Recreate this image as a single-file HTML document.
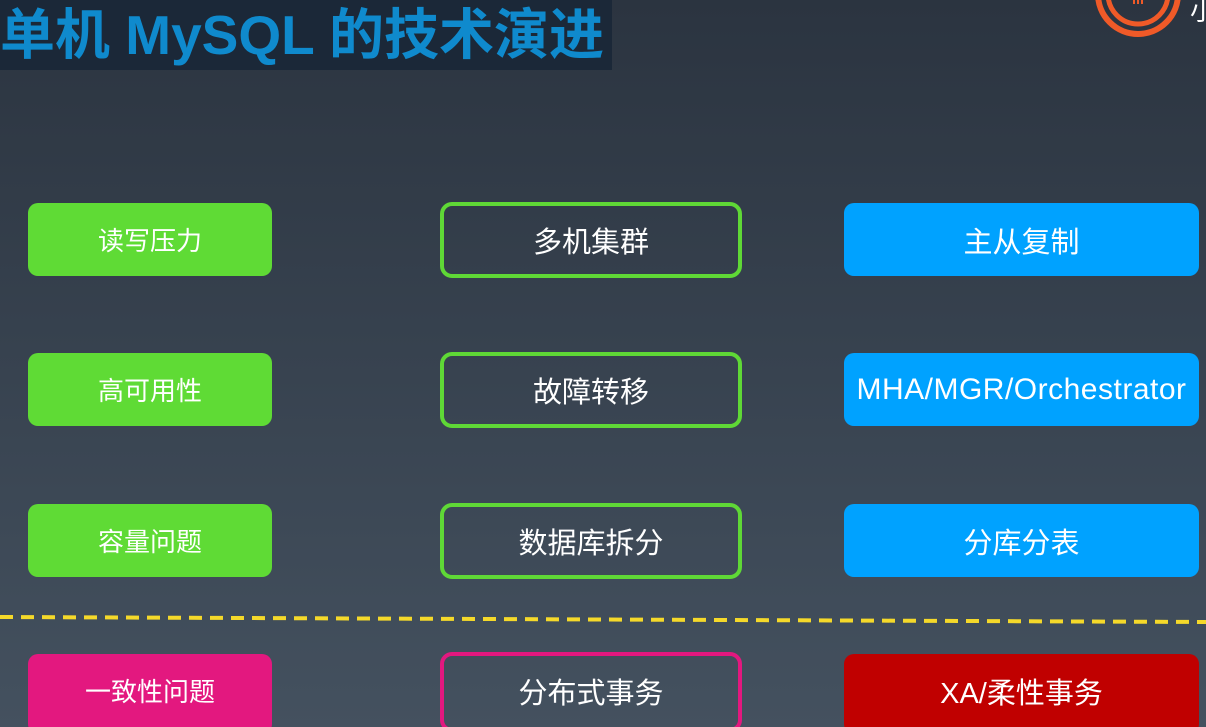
<!DOCTYPE html>
<html><head><meta charset="utf-8"><style>
html,body{margin:0;width:1206px;height:727px;overflow:hidden}
body{background:linear-gradient(#2b3440,#44515f);font-family:"Liberation Sans","Noto Sans CJK SC",sans-serif;position:relative}
.t{position:absolute;left:0;top:0;width:612px;height:70px;background:#1b2838;color:#0f8acd;font-weight:bold;font-size:55px;line-height:70px;white-space:nowrap;overflow:hidden;font-family:"Liberation Sans","Noto Sans CJK SC",sans-serif}
.b{position:absolute;box-sizing:border-box;border-radius:10px;color:#fff;display:flex;align-items:center;justify-content:center;white-space:nowrap}
.l{left:28px;width:244px;height:73px;background:#5fdb35;font-size:26px}
.m{left:440px;width:302px;height:76px;border:4px solid #5fd836;font-size:29px;border-radius:12px}
.r{left:844px;width:355px;height:73px;background:#00a2ff;font-size:29px}
</style></head><body>
<div class="t">单机 MySQL 的技术演进</div>
<svg style="position:absolute;left:1090px;top:0" width="116" height="45">
<circle cx="48" cy="-6" r="40" fill="none" stroke="#f05a28" stroke-width="6"/>
<circle cx="48" cy="-6" r="30" fill="none" stroke="#f05a28" stroke-width="5"/>
<rect x="43" y="0" width="2" height="4" fill="#f05a28"/><rect x="47" y="0" width="2" height="4" fill="#f05a28"/><rect x="51" y="0" width="2" height="4" fill="#f05a28"/>
<text x="100" y="20" fill="#fff" font-size="26" font-family="Noto Sans CJK SC">小</text>
</svg>
<div class="b l" style="top:203px">读写压力</div>
<div class="b m" style="top:202px">多机集群</div>
<div class="b r" style="top:203px">主从复制</div>
<div class="b l" style="top:353px">高可用性</div>
<div class="b m" style="top:352px">故障转移</div>
<div class="b r" style="top:353px;font-size:30px;letter-spacing:0.5px">MHA/MGR/Orchestrator</div>
<div class="b l" style="top:504px">容量问题</div>
<div class="b m" style="top:503px">数据库拆分</div>
<div class="b r" style="top:504px">分库分表</div>
<svg style="position:absolute;left:0;top:610px" width="1206" height="20"><line x1="0" y1="7" x2="1206" y2="12" stroke="#f5d92a" stroke-width="4" stroke-dasharray="13 8"/></svg>
<div class="b l" style="top:654px;background:#e3187f;height:80px;padding-bottom:7px">一致性问题</div>
<div class="b m" style="top:652px;border-color:#e3187f;height:80px;padding-bottom:3px">分布式事务</div>
<div class="b r" style="top:654px;background:#c00000;height:80px;padding-bottom:7px">XA/柔性事务</div>
</body></html>
